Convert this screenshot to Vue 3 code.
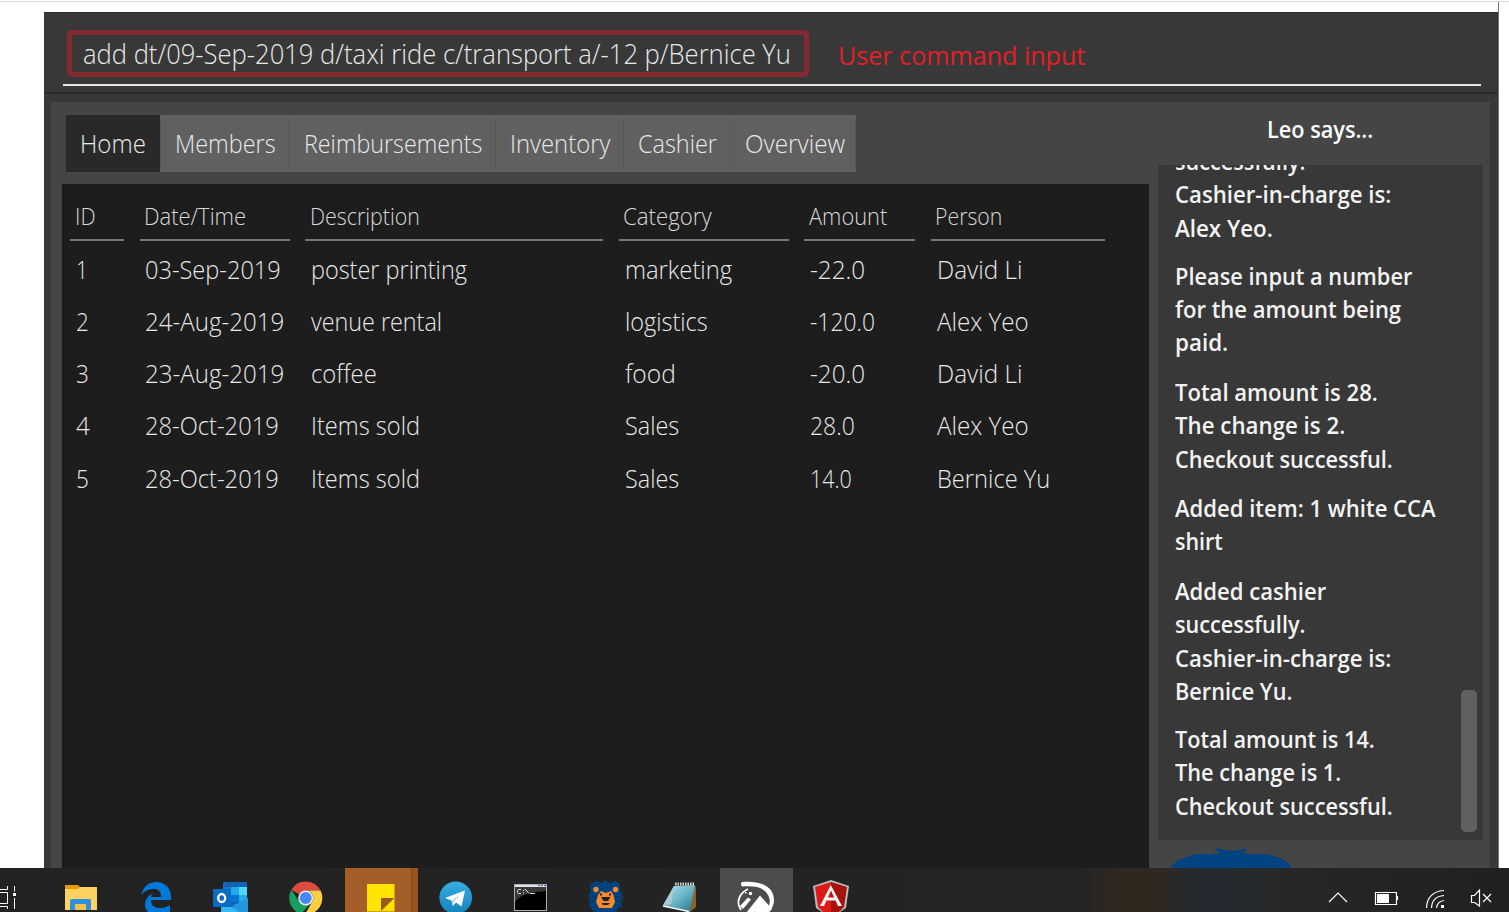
<script setup>
const vFit = (el, { value }) => {
  el.style.transform = `scaleX(${value / el.offsetWidth})`
}

const tabs = [
  { t: 'Home', f: 66, w: 94.5 },
  { t: 'Members', f: 101, w: 129 },
  { t: 'Reimbursements', f: 178, w: 206 },
  { t: 'Inventory', f: 100, w: 128 },
  { t: 'Cashier', f: 79, w: 107 },
  { t: 'Overview', f: 100, w: 125 },
]

const columns = [
  { t: 'ID', f: 21 },
  { t: 'Date/Time', f: 102 },
  { t: 'Description', f: 110 },
  { t: 'Category', f: 89 },
  { t: 'Amount', f: 78 },
  { t: 'Person', f: 67 },
]

const rows = [
  [['1', 12], ['03-Sep-2019', 136], ['poster printing', 156], ['marketing', 107], ['-22.0', 55], ['David Li', 85]],
  [['2', 13], ['24-Aug-2019', 139], ['venue rental', 131], ['logistics', 83], ['-120.0', 65], ['Alex Yeo', 92]],
  [['3', 13], ['23-Aug-2019', 139], ['coffee', 66], ['food', 51], ['-20.0', 55], ['David Li', 85]],
  [['4', 14], ['28-Oct-2019', 134], ['Items sold', 109], ['Sales', 54], ['28.0', 45], ['Alex Yeo', 92]],
  [['5', 13], ['28-Oct-2019', 134], ['Items sold', 109], ['Sales', 54], ['14.0', 42], ['Bernice Yu', 113]],
]

const messages = [
  { gap: 14.5, lines: [['successfully.', 130], ['Cashier-in-charge is:', 216], ['Alex Yeo.', 98]] },
  { gap: 16, lines: [['Please input a number', 237], ['for the amount being', 226], ['paid.', 53]] },
  { gap: 15.5, lines: [['Total amount is 28.', 203], ['The change is 2.', 170], ['Checkout successful.', 218]] },
  { gap: 16.5, lines: [['Added item: 1 white CCA', 261], ['shirt', 48]] },
  { gap: 14.5, lines: [['Added cashier', 151], ['successfully.', 130], ['Cashier-in-charge is:', 216], ['Bernice Yu.', 117]] },
  { gap: 0, lines: [['Total amount is 14.', 200], ['The change is 1.', 166], ['Checkout successful.', 218]] },
]
</script>

<template>
  <div class="page">
    <div class="app">
      <header class="command">
        <div class="field">
          <span class="entry"><span v-fit="708" class="fit">add dt/09-Sep-2019 d/taxi ride c/transport a/-12 p/Bernice Yu</span></span>
          <span class="note"><span v-fit="247" class="fit">User command input</span></span>
        </div>
      </header>
      <div class="body">
        <main class="left">
          <nav class="tabs">
            <div v-for="(tab, i) in tabs" :key="tab.t" class="tab" :class="{ active: i === 0 }" :style="{ width: tab.w + 'px' }">
              <span v-fit="tab.f" class="fit">{{ tab.t }}</span>
            </div>
          </nav>
          <section class="table">
            <div class="grid head">
              <div v-for="c in columns" :key="c.t" class="th"><span v-fit="c.f" class="fit">{{ c.t }}</span></div>
            </div>
            <div v-for="(r, i) in rows" :key="i" class="grid row">
              <div v-for="(c, j) in r" :key="j" class="td"><span v-fit="c[1]" class="fit">{{ c[0] }}</span></div>
            </div>
          </section>
        </main>
        <aside class="right">
          <h2 class="title"><span v-fit="106" class="fit">Leo says...</span></h2>
          <div class="log">
            <div class="messages">
              <div v-for="(m, i) in messages" :key="i" class="msg" :style="{ marginBottom: m.gap + 'px' }">
                <div v-for="l in m.lines" :key="l[0]" class="line"><span v-fit="l[1]" class="fit">{{ l[0] }}</span></div>
              </div>
            </div>
            <div class="thumb"></div>
          </div>
          <svg class="mascot" width="124" height="20" viewBox="0 0 124 20">
            <path d="M1 20C7 11 19 8 29 6H51L46 1L47 0L52 1L55 2L63 3L71 2L76 0L77 1L74 6H96C107 8 117 11 123 20Z" fill="#004481" />
          </svg>
        </aside>
      </div>
    </div>

    <footer class="taskbar">
      <svg class="view" width="18" height="44" viewBox="0 0 18 44" fill="none" stroke="#fff" stroke-width="1">
        <path d="M0 21.5H7.500V18M0 24.500H7.500V35.500H0M0 38.500H7.500V41M14.500 18v5.500M14.500 30v11" />
        <rect x="13" y="25" width="3" height="3" fill="#fff" stroke="none" />
      </svg>
      <div class="icons">
        <svg viewBox="0 0 73 44">
          <path d="M20 19H52V42H20Z" fill="#fdd263" />
          <path d="M20 22V17H33L35 19L33 21H20Z" fill="#e39b00" />
          <path d="M25 42V33Q25 31 27 31H44Q46 31 46 33V42H41V36H30V42Z" fill="#2f8fdc" />
          <path d="M30 36H41V42H30Z" fill="#f2c349" />
        </svg>
        <svg viewBox="0 0 73 44">
          <path d="M21.500 27C23 18 29 14 36 14C46 14 51 21 51 29V32H31C31 38 35 40 40 40C44 40 47 39 50 37V44H28C23 39 24 29 33 25C31 27 31 28 31 29H41C41 24 39 21 34 21C29 21 24 23 21.500 27Z" fill="#0078d7" />
        </svg>
        <svg viewBox="0 0 73 44">
          <path d="M29 14H51Q52 14 52 15V44H28V15Q28 14 29 14Z" fill="#0f64b8" />
          <path d="M28 19H36V27H28Z" fill="#1178c9" /><path d="M36 19H44V27H36Z" fill="#28a8ea" /><path d="M44 19H52V27H44Z" fill="#50d9ff" />
          <path d="M36 27H44V34H36Z" fill="#0078d4" /><path d="M44 27H52V34H44Z" fill="#28a8ea" />
          <path d="M26 36L53 44H26Z" fill="#35b8f1" /><path d="M37 38L53 30V44H43Z" fill="#2496dd" />
          <rect x="18" y="21" width="18" height="18" rx="1" fill="#0a6ac4" />
          <ellipse cx="26.700" cy="30" rx="3.500" ry="4" fill="none" stroke="#fff" stroke-width="2.300" />
        </svg>
        <svg viewBox="0 0 73 44">
          <path d="M35.700 30L21.400 21.800A16.500 16.500 0 0 1 50.500 22.500H35.700Z" fill="#dd4b3e" />
          <path d="M21.400 21.800A16.500 16.500 0 0 0 31 45.800L42.200 33.800L35.700 37.500L29.200 33.800Z" fill="#17a05d" />
          <path d="M35.700 22.500H50.500A16.500 16.500 0 0 1 35 46.500L42.200 33.800A7.500 7.500 0 0 0 35.700 22.500Z" fill="#fdcd44" />
          <circle cx="35.700" cy="30" r="7.500" fill="#f1f1f1" /><circle cx="35.700" cy="30" r="6" fill="#4587f3" />
        </svg>
        <svg class="sticky" viewBox="0 0 73 44">
          <path d="M66 0H73V44H66Z" fill="#9a5121" /><path d="M66 0H67V44H66Z" fill="#87471f" />
          <path d="M22 16H49.500V30L36 43.500H22Z" fill="#ffe400" /><path d="M36 43V30H49.500Z" fill="#9b571f" /><path d="M49.500 30V43.500H36Z" fill="#ffe400" />
        </svg>
        <svg viewBox="0 0 73 44">
          <defs><linearGradient id="tg" x2="0" y2="1"><stop stop-color="#37aee2" /><stop offset="1" stop-color="#1382bb" /></linearGradient></defs>
          <circle cx="35.700" cy="29.700" r="16.300" fill="url(#tg)" />
          <path d="M25 30L45 22.500L41.500 38.500L36 34.500L33 38L31.500 32.500Z" fill="#fff" />
          <path d="M31.500 32.500L41 26L34.500 33L33 38Z" fill="#bcd8e8" />
        </svg>
        <svg viewBox="0 0 73 44">
          <rect x="19.500" y="16.500" width="32" height="26" fill="#000" stroke="#a9adb3" />
          <path d="M20 17H51V19H20Z" fill="#dfe4ec" /><path d="M43 17h2v1h-2zm3 0h2v1h-2zm3 0h2v1h-2z" fill="#3b5c9c" />
          <path d="M20 19H51V23Q27 24 20 34Z" fill="#393939" />
          <path d="M26 21.500H23.500L22.500 22.500V24.500L23.500 25.500H26M28.500 22v1M28.500 24.500v1M30 21L34 25.500M35 25.500H40" fill="none" stroke="#e5e5e5" />
        </svg>
        <svg viewBox="0 0 73 44">
          <path d="M22 15L27 13L31 15L35 12L40 15L46 13L50 16V22L53 29L51 35L52 39L48 40L46 44H24L21 40L19 38L20 33L18 28L21 23L20 18Z" fill="#00427e" />
          <circle cx="26" cy="21.500" r="2.700" fill="#f38b2c" /><circle cx="45.500" cy="21.500" r="2.700" fill="#f38b2c" />
          <path d="M28 27L31 23L35.700 25L41 23L43.500 27L45 34L42 40H29L26 34Z" fill="#f38b2c" />
          <path d="M31 29H40.500L38 33H33.500ZM30 25.500h2v2h-2zm9 0h2v2h-2zM31.500 35h8.500L38 37h-5z" fill="#242020" />
          <path d="M21 29h5M20 33h6M46 29h5M46 33h6" stroke="#172c47" />
        </svg>
        <svg viewBox="0 0 73 44">
          <defs><linearGradient id="np" x2="1" y2="1"><stop stop-color="#c2e6ed" /><stop offset=".5" stop-color="#6bb6c9" /><stop offset="1" stop-color="#256e88" /></linearGradient></defs>
          <path d="M47 17L51 19V39L45 44H40Z" fill="#8a6527" />
          <path d="M29 18L50 17L45 44L18 38Z" fill="url(#np)" /><path d="M29 18L18 37L26 36Z" fill="#a9cbcf" />
          <path d="M18 38L44 43.500" stroke="#eef6f6" stroke-width="1.500" />
          <path d="M30 16H50" stroke="#d7d7cb" stroke-width="3" stroke-dasharray="1.500 1" />
        </svg>
        <svg class="open" viewBox="0 0 73 44" fill="#fff">
          <path d="M22 14C36 12.500 54 16 54 32C54 37 52 41 48 45L46 43C49 39 50.500 35 49.500 31C47 19.500 36 17.500 22 18.500Q20 16 22 14Z" />
          <path d="M26 45L40 27.500L52 41L48 45Z" />
          <path d="M28 21C20 25 17 32 19 38L21 42" fill="none" stroke="#fff" stroke-width="1.700" />
          <path d="M20 38L28 29.500L31 31.500L23 41ZM25 24h1.500v1.500h-1.500z" /><circle cx="30.500" cy="25.500" r="1.700" />
        </svg>
        <svg viewBox="0 0 73 44">
          <path d="M36 12L54 18L51 40L45 44H27L21 40L18 18Z" fill="#b9bcbe" />
          <path d="M36 14L20 19L23 39L28 44H36Z" fill="#dd1b16" /><path d="M36 14L52 19L49 39L44 44H36Z" fill="#a6120d" />
          <path d="M35.800 17L25 38H29L31.500 32.500H40.500L43 38H47ZM36 22.500L39 29.500H32.800Z" fill="#f4f4f4" fill-rule="evenodd" />
        </svg>
      </div>
      <svg class="tray" width="180" height="44" viewBox="0 0 180 44" fill="none" stroke="#fff" stroke-width="1.200">
        <path d="M9 34L18 25L27 34" />
        <path d="M55.500 24.500H76.500V36.500H55.500ZM77.500 28V32" /><rect x="57" y="26" width="12" height="9" fill="#fff" stroke="none" />
        <path d="M106.500 40Q107 24 124 22.500M111.500 40Q112 28.500 124 27.500M116.500 40Q117 33.500 124 32.500" />
        <rect x="121" y="37" width="3" height="3" fill="#fff" stroke="none" />
        <path d="M151.500 27.500H154.500L159.500 22V38L154.500 34.500H151.500ZM163 26L171 34M171 26L163 34" />
      </svg>
    </footer>
  </div>
</template>

<style>
body { margin: 0; overflow: hidden; }
</style>

<style scoped>
* { box-sizing: border-box; }
.fit { display: inline-block; transform-origin: 0 50%; white-space: nowrap; }
.page { position: relative; width: 1509px; height: 912px; padding: 12px 0 0 44px; overflow: hidden; background: linear-gradient(#fff 1px, #d9dadb 1px, #d9dadb 2px, #fff 2px); font-family: "Open Sans", "Noto Sans", sans-serif; font-weight: 300; color: #e9e9e9; display: flex; flex-direction: column; }
.page::after { content: ""; position: absolute; left: 1498px; top: 2px; width: 1px; height: 866px; background: #77776a; }
.app { width: 1454px; height: 856px; background: #383838; display: flex; flex-direction: column; }
.command { height: 82px; flex: none; padding: 17px 16px 0 19px; border: 1px solid #303030; border-bottom: 2px solid #2c2c2c; border-left: 0; margin-bottom: 8px; }
.field { height: 56px; border-bottom: 2px solid #e4e4e4; display: flex; align-items: flex-start; padding-left: 4px; }
.entry { width: 742px; height: 47px; border: 5px solid #842930; border-radius: 5px; padding-left: 10.5px; line-height: 37px; font-size: 28px; white-space: nowrap; }
.note { margin-left: 29px; width: 260px; color: #e31e26; font-size: 25.5px; font-weight: 400; line-height: 51px; white-space: nowrap; }
.body { flex: 1; margin: 0 8px 0 7px; background: #454545; display: flex; gap: 9px; padding-left: 11px; }
.left { width: 1087px; display: flex; flex-direction: column; gap: 12px; padding-top: 13px; }
.tabs { display: flex; height: 57px; padding-left: 4px; flex: none; }
.tab { padding-left: 14px; line-height: 57px; font-size: 25.5px; background: #606060; border-right: 1px solid #595959; white-space: nowrap; }
.tab.active { background: #292929; }
.table { flex: 1; background: #1d1d1d; padding: 14px 8px 0; }
.grid { display: grid; grid-template-columns: 54px 150px 298px 170px 111px 174px; column-gap: 15.6px; white-space: nowrap; }
.th { height: 42.5px; border-bottom: 2px solid #777; line-height: 37px; font-size: 23.5px; padding-left: 4.500px; color: #d8d8d8; }
.row { height: 52.100px; font-size: 26px; line-height: 52px; }
.head { margin-bottom: 2.7px; }
.td { padding-left: 5.800px; }
.right { width: 325px; display: flex; flex-direction: column; font-weight: 600; color: #fff; }
.title { margin: 0; height: 63px; padding-left: 109px; font-size: 22.5px; font-weight: 600; line-height: 56px; }
.log { height: 675px; flex: none; background: #383838; position: relative; overflow: hidden; padding-left: 16.5px; }
.messages { margin-top: -20px; color: #f3f3f3; }
.line { height: 33.400px; line-height: 33.400px; font-size: 22.8px; white-space: nowrap; }
.thumb { position: absolute; right: 6px; top: 525px; width: 16px; height: 142px; border-radius: 5px; background: #606060; }
.mascot { margin: 8px 0 0 11px; }
.taskbar { position: relative; height: 44px; flex: none; margin-left: -44px; display: flex; background: linear-gradient(90deg, #222 0, #242424 1080px, #30281f 1120px, #30281f 1155px, #242a30 1200px, #252a2e 1235px, #272727 1280px, #202020 1509px); }
.view { width: 18px; height: 44px; flex: none; margin-right: 27px; }
.icons { display: flex; gap: 2px; flex: 1; }
.icons svg { width: 73px; height: 44px; flex: none; }
.icons .sticky { background: #a65e28; }
.icons .open { background: #4c4c4c; }
.tray { margin-right: 9px; }
</style>
